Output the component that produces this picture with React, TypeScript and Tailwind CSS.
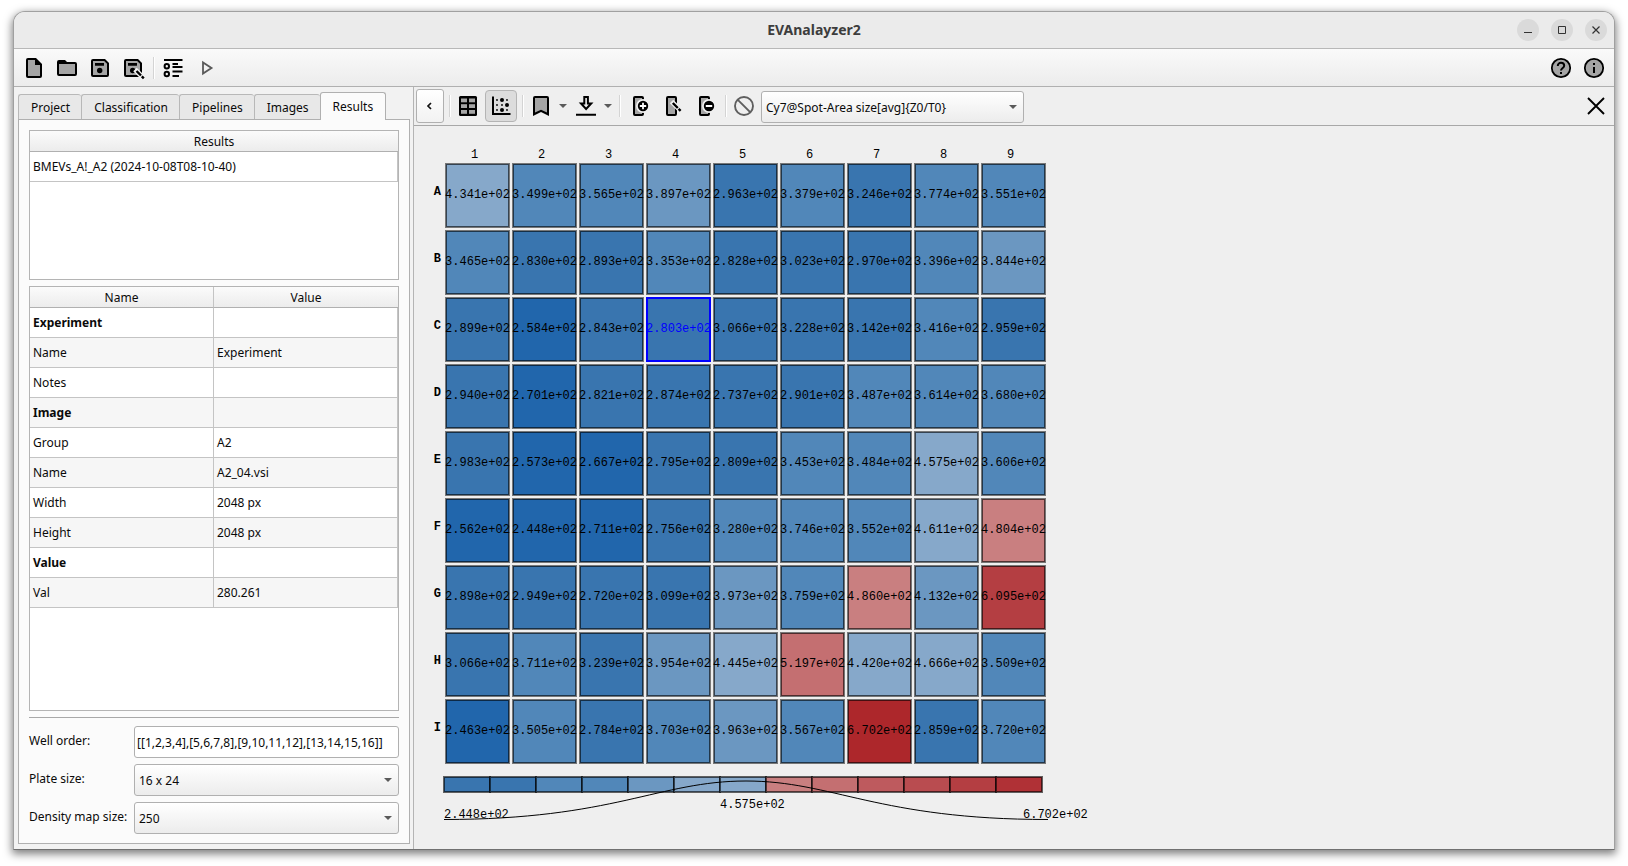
import { useState, type ReactNode } from "react";

const MATRIX: number[][] = [
  [4.341, 3.499, 3.565, 3.897, 2.963, 3.379, 3.246, 3.774, 3.551],
  [3.465, 2.83, 2.893, 3.353, 2.828, 3.023, 2.97, 3.396, 3.844],
  [2.899, 2.584, 2.843, 2.803, 3.066, 3.228, 3.142, 3.416, 2.959],
  [2.94, 2.701, 2.821, 2.874, 2.737, 2.901, 3.487, 3.614, 3.68],
  [2.983, 2.573, 2.667, 2.795, 2.809, 3.453, 3.484, 4.575, 3.606],
  [2.562, 2.448, 2.711, 2.756, 3.28, 3.746, 3.552, 4.611, 4.804],
  [2.898, 2.949, 2.72, 3.099, 3.973, 3.759, 4.86, 4.132, 6.095],
  [3.066, 3.711, 3.239, 3.954, 4.445, 5.197, 4.42, 4.666, 3.509],
  [2.463, 3.505, 2.784, 3.703, 3.963, 3.567, 6.702, 2.859, 3.72],
];

const ROWS = ["A", "B", "C", "D", "E", "F", "G", "H", "I"];

const LEGEND = [
  "#3975af", "#3975af", "#5187b9", "#5187b9", "#6b97c1", "#86a8ca", "#86a8ca",
  "#c97f80", "#c46f71", "#be5a5e", "#b94c50", "#b43e42", "#b03136",
];

function cellColor(v: number): string {
  if (v < 2.715) return "bg-[#2166ac]";
  if (v < 3.26) return "bg-[#3975af]";
  if (v < 3.8) return "bg-[#5187b9]";
  if (v < 4.2) return "bg-[#6b97c1]";
  if (v < 4.7) return "bg-[#86a8ca]";
  if (v < 5) return "bg-[#c97f80]";
  if (v < 5.5) return "bg-[#c46f71]";
  if (v < 6.4) return "bg-[#b43e42]";
  return "bg-[#ad272b]";
}

const DETAILS: { name: string; value: string; group?: boolean }[] = [
  { name: "Experiment", value: "", group: true },
  { name: "Name", value: "Experiment" },
  { name: "Notes", value: "" },
  { name: "Image", value: "", group: true },
  { name: "Group", value: "A2" },
  { name: "Name", value: "A2_04.vsi" },
  { name: "Width", value: "2048 px" },
  { name: "Height", value: "2048 px" },
  { name: "Value", value: "", group: true },
  { name: "Val", value: "280.261" },
];

const GREY = "#a5a5a5";

function Icon({ children }: { children: ReactNode }) {
  return (
    <svg viewBox="0 0 24 24" className="size-6 shrink-0" fill="none" aria-hidden="true">
      {children}
    </svg>
  );
}

function IconButton({ label, children, pressed }: { label: string; children: ReactNode; pressed?: boolean }) {
  return (
    <button
      type="button"
      aria-label={label}
      aria-pressed={pressed}
      className={
        pressed
          ? "flex h-8 w-8 items-center justify-center rounded-sm border border-[#b4b4b4] bg-[#dcdcdc]"
          : "flex size-6 items-center justify-center"
      }
    >
      {children}
    </button>
  );
}

function Separator() {
  return <span className="h-[22px] w-[2px] border-l border-[#d4d4d4] bg-white" />;
}

function Caret() {
  return (
    <svg viewBox="0 0 8 4" className="h-1 w-2" aria-hidden="true">
      <path d="M0 0h8L4 4z" fill="#5a5a5a" />
    </svg>
  );
}

function FileIcon() {
  return (
    <Icon>
      <path d="M6 2h8l6 6v12a2 2 0 0 1-2 2H6a2 2 0 0 1-2-2V4a2 2 0 0 1 2-2z" fill="#000" />
      <path d="M6 4h7v5h5v11H6z" fill={GREY} />
    </Icon>
  );
}

function FolderIcon() {
  return (
    <Icon>
      <path d="M4 4h6l2 2h8a2 2 0 0 1 2 2v10a2 2 0 0 1-2 2H4a2 2 0 0 1-2-2V6a2 2 0 0 1 2-2z" fill="#000" />
      <path d="M4 8h16v10H4z" fill={GREY} />
    </Icon>
  );
}

function FloppyShape() {
  return (
    <>
      <path d="M5 3h12l4 4v12a2 2 0 0 1-2 2H5a2 2 0 0 1-2-2V5a2 2 0 0 1 2-2z" fill="#000" />
      <path d="M5 5h11.2L19 7.8V19H5z" fill={GREY} />
      <path d="M7 7h9v2.8H7z" fill="#000" />
      <circle cx="11.7" cy="14.5" r="2.7" fill="#000" />
    </>
  );
}

function SaveEditIcon() {
  return (
    <Icon>
      <FloppyShape />
      <path d="M14 13.5l9 9" stroke="#f2f2f2" strokeWidth="5" />
      <path d="M15.5 15l4.5 4.5M20.8 20.3l2 2" stroke="#000" strokeWidth="2.4" />
    </Icon>
  );
}

function ListIcon() {
  return (
    <Icon>
      <path
        d="M3 4h18.500M11.500 8h5.500M11.500 11h10M11.500 15.500h10M11.500 20h6.500"
        stroke="#000"
        strokeWidth="1.9"
      />
      <circle cx="5.800" cy="10.200" r="2.200" stroke="#000" strokeWidth="2" />
      <circle cx="5.800" cy="18" r="2.200" stroke="#000" strokeWidth="2" />
    </Icon>
  );
}

function TableIcon() {
  return (
    <Icon>
      <rect x="3" y="2" width="18" height="20" rx="1.500" fill="#000" />
      {[4.500, 10.200, 16].map((y) => (
        <g key={y} fill={GREY}>
          <rect x="5" y={y} width="6" height="3.800" />
          <rect x="13" y={y} width="6" height="3.800" />
        </g>
      ))}
    </Icon>
  );
}

function ScatterIcon() {
  return (
    <Icon>
      <path d="M4 2.500V20h17.500" stroke="#000" strokeWidth="2" />
      <g fill="#000">
        <circle cx="13" cy="6" r="2" />
        <circle cx="18" cy="11" r="2" />
        <circle cx="13" cy="16" r="2" />
        <circle cx="8" cy="6" r="0.900" />
        <circle cx="18" cy="6" r="0.900" />
        <circle cx="8" cy="11" r="0.900" />
        <circle cx="13" cy="11" r="0.900" />
        <circle cx="8" cy="16" r="0.900" />
        <circle cx="18" cy="16" r="0.900" />
      </g>
    </Icon>
  );
}

function BookmarkIcon() {
  return (
    <Icon>
      <path d="M4 4a2 2 0 0 1 2-2h12a2 2 0 0 1 2 2v18l-8-4-8 4z" fill="#000" />
      <path d="M6 4h12v14.600l-6-2.800-6 2.800z" fill={GREY} />
    </Icon>
  );
}

function DownloadIcon() {
  return (
    <Icon>
      <path d="M10.300 3h3.600v6.500h3.300L12.100 15 7 9.500h3.300z" fill="#efefef" stroke="#000" strokeWidth="2" />
      <path d="M2 20.800h20" stroke="#000" strokeWidth="2" />
    </Icon>
  );
}

function DocShape({ kind }: { kind: "add" | "edit" | "remove" }) {
  return (
    <Icon>
      <rect x="6" y="3" width="9" height="18" rx="1" fill={GREY} stroke="#000" strokeWidth="2" />
      {kind === "edit" ? (
        <>
          <path d="M10.500 7.500l10 10" stroke="#efefef" strokeWidth="5" />
          <path d="M11.800 9l5 5M17.600 14.800l2 2" stroke="#000" strokeWidth="2.400" />
        </>
      ) : (
        <>
          <circle cx="15" cy="12" r="7" fill="#efefef" />
          <circle cx="15" cy="12" r="5.200" fill="#000" />
          <path
            d={kind === "add" ? "M15 8.800v6.400M11.800 12h6.400" : "M11.800 12h6.400"}
            stroke="#fff"
            strokeWidth="1.800"
          />
        </>
      )}
    </Icon>
  );
}

function SideTabs() {
  const [active, setActive] = useState("Results");
  return (
    <div role="tablist" className="relative z-10 flex h-7 items-end">
      {["Project", "Classification", "Pipelines", "Images", "Results"].map((t) => (
        <button
          key={t}
          type="button"
          role="tab"
          aria-selected={t === active}
          onClick={() => setActive(t)}
          className={
            t === active
              ? "-mb-px h-7 rounded-t-[3px] border border-b-0 border-[#b0b0b0] bg-[#fbfbfb] px-3"
              : "h-[25px] rounded-t-[3px] border border-r-0 border-b-0 border-[#b8b8b8] bg-[#e8e8e8] pt-px pr-[11px] pl-3"
          }
        >
          {t}
        </button>
      ))}
    </div>
  );
}

function SelectBox({ id, options, label }: { id: string; options: string[]; label?: string }) {
  return (
    <div className="relative flex">
      <select
        id={id}
        aria-label={label}
        className="h-8 w-full appearance-none rounded-[3px] border border-[#b0b0b0] bg-linear-to-b from-white to-[#ececec] pt-[2px] pr-6 pl-1 outline-none"
      >
        {options.map((o) => (
          <option key={o}>{o}</option>
        ))}
      </select>
      <span className="pointer-events-none absolute inset-y-0 right-[7px] flex items-center">
        <Caret />
      </span>
    </div>
  );
}

const HEAD = "h-[21px] border-b border-[#b0b0b0] bg-linear-to-b from-[#fbfbfb] to-[#ececec] p-0 pt-[2px] font-normal";

function SidePanel() {
  return (
    <aside className="flex w-[400px] shrink-0 flex-col border-r border-[#b4b4b4] bg-[#f2f2f2] pt-1 pr-[3px] pb-[5px] pl-1">
      <SideTabs />
      <div className="flex min-h-0 flex-1 flex-col border border-[#b0b0b0] bg-[#fbfbfb] px-[10px] pt-[10px] pb-[9px]">
        <div className="h-[150px] shrink-0 border border-[#b4b4b4] bg-white">
          <table className="w-full border-separate border-spacing-0">
            <thead>
              <tr>
                <th className={HEAD}>Results</th>
              </tr>
            </thead>
            <tbody>
              <tr>
                <td className="h-[30px] border-r border-b border-[#c4c4c4] p-0 pl-[3px]">
                  BMEVs_A!_A2 (2024-10-08T08-10-40)
                </td>
              </tr>
            </tbody>
          </table>
        </div>

        <div className="mt-[6px] min-h-0 flex-1 overflow-hidden border border-[#b4b4b4] bg-white">
          <table className="w-full table-fixed border-separate border-spacing-0">
            <thead>
              <tr>
                <th className={`${HEAD} border-r border-r-[#c4c4c4]`}>Name</th>
                <th className={HEAD}>Value</th>
              </tr>
            </thead>
            <tbody>
              {DETAILS.map((d, i) => (
                <tr key={i} className={i % 2 ? "bg-[#f6f6f6]" : "bg-white"}>
                  <td
                    className={`h-[30px] border-r border-b border-[#c4c4c4] p-0 pl-[3px] ${d.group ? "font-bold" : ""}`}
                  >
                    {d.name}
                  </td>
                  <td className="h-[30px] border-r border-b border-[#c4c4c4] p-0 pl-[3px]">{d.value}</td>
                </tr>
              ))}
            </tbody>
          </table>
        </div>

        <hr className="mt-[6px] border-[#a8a8a8]" />

        <div className="mt-2 grid grid-cols-[105px_1fr] items-center gap-y-[6px]">
          <label htmlFor="well-order" className="pb-[2px]">Well order:</label>
          <input
            id="well-order"
            defaultValue="[[1,2,3,4],[5,6,7,8],[9,10,11,12],[13,14,15,16]]"
            className="h-8 w-full rounded-[3px] border border-[#b0b0b0] bg-white px-[2px] outline-none"
          />
          <label htmlFor="plate-size" className="pb-[2px]">Plate size:</label>
          <SelectBox id="plate-size" options={["16 x 24", "8 x 12", "4 x 6"]} />
          <label htmlFor="density-size" className="pb-[2px]">Density map size:</label>
          <SelectBox id="density-size" options={["250", "200", "100"]} />
        </div>
      </div>
    </aside>
  );
}

function ResultsToolbar() {
  return (
    <div className="flex h-[39px] shrink-0 items-center border-b border-[#a8a8a8] pr-[6px] pl-[2px]">
      <button
        type="button"
        aria-label="Back"
        className="flex h-[34px] w-7 items-center justify-center rounded-[3px] border border-[#b0b0b0] bg-linear-to-b from-white to-[#f2f2f2]"
      >
        <svg viewBox="0 0 8 10" className="h-[10px] w-2" fill="none" aria-hidden="true">
          <path d="M5 2L2 5l3 3" stroke="#111" strokeWidth="1.700" />
        </svg>
      </button>
      <div className="ml-[5px] flex items-center gap-[5px]">
        <Separator />
        <IconButton label="Table view"><TableIcon /></IconButton>
        <IconButton label="Heatmap view" pressed><ScatterIcon /></IconButton>
        <Separator />
      </div>
      <div className="ml-[5px] flex items-center gap-[6px]">
        <IconButton label="Bookmarks"><BookmarkIcon /></IconButton>
        <button type="button" aria-label="Bookmark options" className="w-[9px]"><Caret /></button>
        <IconButton label="Export"><DownloadIcon /></IconButton>
        <button type="button" aria-label="Export options" className="w-[9px]"><Caret /></button>
        <Separator />
      </div>
      <div className="ml-[7px] flex items-center gap-[9px]">
        <IconButton label="Add column"><DocShape kind="add" /></IconButton>
        <IconButton label="Edit column"><DocShape kind="edit" /></IconButton>
        <IconButton label="Remove column"><DocShape kind="remove" /></IconButton>
      </div>
      <div className="ml-[7px] flex items-center gap-[5px]">
        <Separator />
        <IconButton label="Exclude">
          <Icon>
            <circle cx="12" cy="12" r="9" stroke="#5f5f5f" strokeWidth="1.900" />
            <path d="M5.600 5.600l12.800 12.800" stroke="#5f5f5f" strokeWidth="1.900" />
          </Icon>
        </IconButton>
        <div className="w-[263px] pt-px">
          <SelectBox id="channel" label="Channel" options={["Cy7@Spot-Area size[avg]{Z0/T0}"]} />
        </div>
      </div>
      <div className="ml-auto">
        <IconButton label="Close results">
          <Icon>
            <path d="M4 4l16 16M20 4L4 20" stroke="#000" strokeWidth="1.900" />
          </Icon>
        </IconButton>
      </div>
    </div>
  );
}

function Heatmap() {
  const [selected, setSelected] = useState("C4");
  return (
    <table className="border-separate border-spacing-[2px]">
      <thead>
        <tr>
          <td className="h-[15px] w-[10px] p-0" />
          {MATRIX[0].map((_, i) => (
            <th key={i} scope="col" className="h-[15px] p-0 pr-[6px] align-bottom leading-[11px] font-normal">
              {i + 1}
            </th>
          ))}
        </tr>
      </thead>
      <tbody>
        {MATRIX.map((row, r) => (
          <tr key={r}>
            <th scope="row" className="w-[10px] p-0 pr-[2px] pb-2 text-right font-bold">{ROWS[r]}</th>
            {row.map((v, c) => {
              const id = `${ROWS[r]}${c + 1}`;
              return (
                <td key={c} className="p-0">
                  <button
                    type="button"
                    aria-label={`Well ${id}`}
                    onClick={() => setSelected(id)}
                    className={`flex size-[65px] items-center justify-center border pb-[2px] whitespace-nowrap ${cellColor(v)} ${
                      id === selected
                        ? "border-[#0000ff] text-[#0000ff] inset-ring inset-ring-[#0000ff]"
                        : "border-[#777777] inset-ring inset-ring-black/60"
                    }`}
                  >
                    {v.toFixed(3)}e+02
                  </button>
                </td>
              );
            })}
          </tr>
        ))}
      </tbody>
    </table>
  );
}

function Legend() {
  return (
    <svg viewBox="0 0 650 50" className="mt-[10px] ml-3 h-[50px] w-[650px]" role="img" aria-label="Value scale">
      {LEGEND.map((fill, i) => (
        <rect key={i} x={1 + i * 46} y="1" width="46" height="15" fill={fill} stroke="#000" strokeOpacity="0.600" strokeWidth="2" />
      ))}
      <path
        d="M1 43.500 C 171 43.500, 216 5, 303 5 S 435 43.500, 605 43.500"
        fill="none"
        stroke="#000"
      />
      <g fill="#000">
        <text x="1" y="42">2.448e+02</text>
        <text x="277" y="32">4.575e+02</text>
        <text x="580" y="42">6.702e+02</text>
      </g>
    </svg>
  );
}

const WINDOW_BUTTON = "flex size-[22px] items-center justify-center rounded-full bg-[#dadada]";

export default function App() {
  return (
    <div className="flex h-screen min-h-[700px] bg-white px-[13px] pt-[11px] pb-4 font-['Noto_Sans',sans-serif] text-[12px] leading-4 text-[#0a0a0a]">
      <div className="flex min-w-0 flex-1 flex-col overflow-hidden rounded-t-xl border border-[#a0a0a0] border-b-[#707070] bg-[#efefef] shadow-[0_3px_9px_1px_rgba(0,0,0,0.5)]">
        <header className="grid h-[37px] shrink-0 grid-cols-[1fr_auto_1fr] items-center border-b border-[#b8b8b8] bg-[#ebebeb]">
          <h1 className="col-start-2 pb-px text-[14px] font-bold text-[#3d3d3d]">EVAnalayzer2</h1>
          <div className="flex justify-end gap-3 pr-[7px]">
            <button type="button" aria-label="Minimize" className={WINDOW_BUTTON}>
              <svg viewBox="0 0 10 10" className="size-[10px]" aria-hidden="true">
                <path d="M1 7.500h8" stroke="#333" />
              </svg>
            </button>
            <button type="button" aria-label="Maximize" className={WINDOW_BUTTON}>
              <svg viewBox="0 0 10 10" className="size-[10px]" fill="none" aria-hidden="true">
                <path d="M1.500 1.500h7v7h-7z" stroke="#333" />
              </svg>
            </button>
            <button type="button" aria-label="Close" className={WINDOW_BUTTON}>
              <svg viewBox="0 0 10 10" className="size-[10px]" aria-hidden="true">
                <path d="M1.500 1.500l7 7M8.500 1.500l-7 7" stroke="#333" strokeWidth="1.200" />
              </svg>
            </button>
          </div>
        </header>

        <div className="flex h-[38px] shrink-0 items-center border-b border-[#b0b0b0] bg-linear-to-b from-[#fafafa] to-[#ececec] pr-2 pl-2">
          <div className="flex items-center gap-[9px]">
            <IconButton label="New"><FileIcon /></IconButton>
            <IconButton label="Open"><FolderIcon /></IconButton>
            <IconButton label="Save"><Icon><FloppyShape /></Icon></IconButton>
            <IconButton label="Save as"><SaveEditIcon /></IconButton>
          </div>
          <div className="ml-2 flex items-center gap-[6px]">
            <Separator />
            <IconButton label="Task list"><ListIcon /></IconButton>
          </div>
          <div className="ml-[10px]">
            <IconButton label="Run">
              <Icon>
                <path d="M8 6.500v11l8.500-5.500z" stroke="#5a5a5a" strokeWidth="1.800" />
              </Icon>
            </IconButton>
          </div>
          <div className="ml-auto flex gap-[9px]">
            <IconButton label="Help">
              <Icon>
                <circle cx="12" cy="12" r="9.200" fill={GREY} stroke="#000" strokeWidth="1.800" />
                <path
                  d="M8.800 9.900c0-1.900 1.400-3.100 3.200-3.100s3.200 1.200 3.200 2.900c0 2.200-3.200 2.400-3.200 4.900"
                  stroke="#000"
                  strokeWidth="2"
                />
                <path d="M11 16h2v2h-2z" fill="#000" />
              </Icon>
            </IconButton>
            <IconButton label="About">
              <Icon>
                <circle cx="12" cy="12" r="9.200" fill={GREY} stroke="#000" strokeWidth="1.800" />
                <path d="M11 7h2v2h-2zM11 11h2v6h-2z" fill="#000" />
              </Icon>
            </IconButton>
          </div>
        </div>

        <div className="flex min-h-0 flex-1">
          <SidePanel />
          <main className="flex min-w-0 flex-1 flex-col">
            <ResultsToolbar />
            <div className="min-h-0 flex-1 overflow-hidden pt-[18px] pl-[17px] font-['Liberation_Mono',monospace] text-[12px] text-black">
              <Heatmap />
              <Legend />
            </div>
          </main>
        </div>
      </div>
    </div>
  );
}
